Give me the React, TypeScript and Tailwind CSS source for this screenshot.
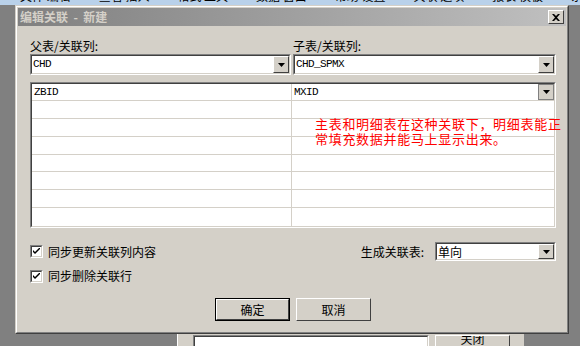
import React from 'react';

const CJK = "font-['Noto_Sans_CJK_SC',sans-serif]";
const MONO = "font-['Liberation_Mono','Noto_Sans_CJK_SC',monospace] text-[11px] tracking-[-0.6px]";

// classic windows bevels
const raised = 'border border-t-white border-l-white border-b-[#404040] border-r-[#404040]';
const sunken = 'border border-t-[#808080] border-l-[#808080] border-b-white border-r-white';
const sunkenInner = 'border border-t-[#404040] border-l-[#404040] border-b-[#d4d0c8] border-r-[#d4d0c8]';

function Arrow() {
  return (
    <svg width="7" height="4" viewBox="0 0 7 4"><path d="M0 0h7L3.5 4z" fill="#000" /></svg>
  );
}

function DropBtn() {
  return (
    <div className={`w-[16px] h-full bg-[#d4d0c8] ${raised} flex items-center justify-center`}>
      <Arrow />
    </div>
  );
}

function Combo({ value, mono = true, className = '' }: { value: string; mono?: boolean; className?: string }) {
  return (
    <div className={`${sunken} ${className}`}>
      <div className={`${sunkenInner} h-full bg-white flex items-stretch`}>
        <div className={`flex-1 flex items-center pl-[1px] text-black ${mono ? MONO : `${CJK} text-[12px]`}`}>{value}</div>
        <DropBtn />
      </div>
    </div>
  );
}

function Check({ label }: { label: string }) {
  return (
    <div className="flex items-center gap-[5px]">
      <div className={`${sunken} w-[13px] h-[13px]`}>
        <div className={`${sunkenInner} w-full h-full bg-white flex items-center justify-center`}>
          <svg width="7" height="7" viewBox="0 0 7 7"><path d="M0 2l2 2 5-5v2L2 6 0 4z" fill="#000" /></svg>
        </div>
      </div>
      <span className={`${CJK} text-[12px] text-black leading-[14px]`}>{label}</span>
    </div>
  );
}

function Button({ label, primary }: { label: string; primary?: boolean }) {
  return (
    <div className={`w-[75px] h-[23px] ${primary ? 'border border-black' : ''}`}>
      <div className={`w-full h-full bg-[#d4d0c8] ${raised} flex items-center justify-center ${CJK} text-[12px] text-black`}>{label}</div>
    </div>
  );
}

export default function App() {
  const rows = [0, 1, 2, 3, 4, 5, 6];
  const topItems = ['文件 编辑', '查看 插入', '格式 工具', '数据 窗口', '帮助 设置', '关联 选项', '报表 模板', '系统'];

  return (
    <div className="w-[580px] h-[346px] bg-[#808080] overflow-hidden flex flex-col relative">
      {/* desktop strip at top */}
      <div className="h-[5px] bg-[#b9d1ea] overflow-hidden flex gap-[28px] pl-[20px] shrink-0">
        {topItems.map((t, i) => (
          <span key={i} className={`${CJK} text-[12px] leading-[14px] text-black mt-[-11px] whitespace-nowrap`}>{t}</span>
        ))}
      </div>

      <div className="flex h-[329px] shrink-0">
        <div className="w-[15px] bg-[#808080]" />
        {/* dialog */}
        <div className="w-[554px] h-full bg-[#d4d0c8] border border-t-[#d4d0c8] border-l-[#d4d0c8] border-b-[#404040] border-r-[#404040]">
          <div className="h-full border border-t-white border-l-white border-b-[#808080] border-r-[#808080] px-[1px] pt-[1px] flex flex-col">
            {/* title bar */}
            <div className="h-[18px] bg-gradient-to-r from-[#808080] to-[#c0c0c0] flex items-center justify-between pl-[2px] pr-[2px]">
              <span className={`${CJK} text-[12px] font-bold text-[#d4d0c8] leading-[14px] whitespace-pre`}>编辑关联  -  新建</span>
              <div className={`w-[16px] h-[14px] bg-[#d4d0c8] ${raised} flex items-center justify-center`}>
                <svg width="8" height="7" viewBox="0 0 8 7"><path d="M0 0h2l2 2 2-2h2L5 3.5 8 7H6L4 5 2 7H0l3-3.5z" fill="#000" /></svg>
              </div>
            </div>

            {/* body */}
            <div className="flex flex-col pl-[12px] w-[538px]">
              <div className="flex mt-[13px] h-[14px]">
                <span className={`${CJK} text-[12px] leading-[14px] text-black w-[263px]`}>父表/关联列:</span>
                <span className={`${CJK} text-[12px] leading-[14px] text-black`}>子表/关联列:</span>
              </div>
              <div className="flex mt-[1px] gap-[2px]">
                <Combo value="CHD" className="w-[261px] h-[21px]" />
                <Combo value="CHD_SPMX" className="w-[263px] h-[21px]" />
              </div>

              {/* grid */}
              <div className={`${sunken} mt-[7px] w-[526px] h-[146px] relative`}>
                <div className={`${sunkenInner} w-full h-full bg-white flex flex-col`}>
                  <div className="h-[17px] flex border-b border-[#d4d0c8]">
                    <div className={`w-[260px] border-r border-[#d4d0c8] flex items-center pl-[2px] text-black ${MONO}`}>ZBID</div>
                    <div className={`flex-1 flex items-center justify-between pl-[2px] text-black ${MONO}`}>
                      <span>MXID</span>
                      <div className="w-[16px] h-full bg-[#d4d0c8] border border-t-[#808080] border-l-[#808080] border-b-[#808080] border-r-[#808080] flex items-center justify-center">
                        <Arrow />
                      </div>
                    </div>
                  </div>
                  {rows.map((r) => (
                    <div key={r} className={`h-[18px] flex ${r < 6 ? 'border-b border-[#d4d0c8]' : ''}`}>
                      <div className="w-[260px] border-r border-[#d4d0c8]" />
                      <div className="flex-1" />
                    </div>
                  ))}
                </div>
                {/* red annotation overlays the grid */}
                <div className={`absolute left-[284px] top-[33px] w-[260px] ${CJK} text-[13px] leading-[15px] tracking-[0.7px] text-[#ff0000] whitespace-nowrap`}>
                  <div>主表和明细表在这种关联下，明细表能正</div>
                  <div>常填充数据并能马上显示出来。</div>
                </div>
              </div>

              <div className="flex mt-[14px] h-[19px] items-center justify-between">
                <Check label="同步更新关联列内容" />
                <div className="flex items-center gap-[11px] h-full">
                  <span className={`${CJK} text-[12px] leading-[14px] text-black`}>生成关联表:</span>
                  <Combo value="单向" mono={false} className="w-[121px] h-[19px]" />
                </div>
              </div>
              <div className="flex mt-[7px] h-[16px] items-center">
                <Check label="同步删除关联行" />
              </div>

              <div className="flex justify-center gap-[6px] mt-[14px]">
                <Button label="确定" primary />
                <Button label="取消" />
              </div>
            </div>
          </div>
        </div>
        <div className="flex-1 bg-[#808080]" />
      </div>

      {/* window behind, bottom */}
      <div className="flex-1 flex">
        <div className="w-[177px]" />
        <div className="w-[347px] bg-[#d4d0c8] border-l border-[#ffffff] flex pt-[1px]">
          <div className={`ml-[15px] w-[236px] ${sunken} h-[20px]`}>
            <div className={`${sunkenInner} h-full bg-white`} />
          </div>
          <div className={`ml-[6px] w-[75px] h-[23px] bg-[#d4d0c8] ${raised} overflow-hidden flex justify-center`}>
            <span className={`${CJK} text-[12px] leading-[14px] text-black mt-[-4px]`}>关闭</span>
          </div>
        </div>
        <div className="flex-1" />
      </div>
    </div>
  );
}
